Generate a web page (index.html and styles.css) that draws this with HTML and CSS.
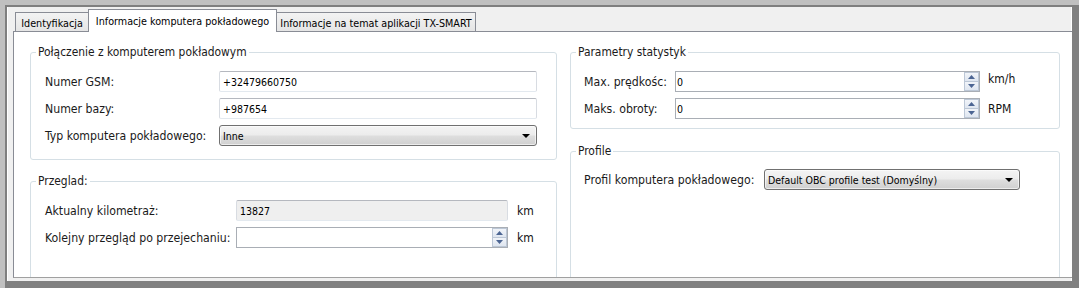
FILE: index.html
```html
<!DOCTYPE html>
<html lang="pl">
<head>
<meta charset="utf-8">
<title>Informacje komputera pokładowego</title>
<link rel="stylesheet" href="styles.css">
</head>
<body>
<div class="window">
  <div class="tabstrip">
    <div class="tab tab-first">Identyfikacja</div>
    <div class="tab active">Informacje komputera pokładowego</div>
    <div class="tab tab-last">Informacje na temat aplikacji TX-SMART</div>
  </div>
  <div class="pane">
    <div class="col">
      <section class="group g-conn">
        <div class="legend">Połączenie z komputerem pokładowym</div>
        <span class="label">Numer GSM:</span>
        <div class="edit">+32479660750</div>
        <span class="label">Numer bazy:</span>
        <div class="edit">+987654</div>
        <span class="label">Typ komputera pokładowego:</span>
        <div class="combo"><span class="combo-text">Inne</span><svg class="arrow" width="8" height="4" viewBox="0 0 8 4"><path d="M0 0H8L4 4Z"/></svg></div>
      </section>
      <section class="group g-review">
        <div class="legend">Przeglad:</div>
        <span class="label">Aktualny kilometraż:</span>
        <div class="edit readonly">13827</div>
        <span class="unit">km</span>
        <span class="label">Kolejny przegląd po przejechaniu:</span>
        <div class="spin"><span class="spin-text"></span><div class="spin-btns"><div class="spin-btn"><svg width="7" height="4" viewBox="0 0 7 4"><path d="M0 4L3.5 0L7 4Z"/></svg></div><div class="spin-btn"><svg width="7" height="4" viewBox="0 0 7 4"><path d="M0 0H7L3.5 4Z"/></svg></div></div></div>
        <span class="unit">km</span>
      </section>
    </div>
    <div class="col">
      <section class="group g-stats">
        <div class="legend">Parametry statystyk</div>
        <span class="label">Max. prędkośc:</span>
        <div class="spin"><span class="spin-text">0</span><div class="spin-btns"><div class="spin-btn"><svg width="7" height="4" viewBox="0 0 7 4"><path d="M0 4L3.5 0L7 4Z"/></svg></div><div class="spin-btn"><svg width="7" height="4" viewBox="0 0 7 4"><path d="M0 0H7L3.5 4Z"/></svg></div></div></div>
        <span class="unit unit-up">km/h</span>
        <span class="label">Maks. obroty:</span>
        <div class="spin"><span class="spin-text">0</span><div class="spin-btns"><div class="spin-btn"><svg width="7" height="4" viewBox="0 0 7 4"><path d="M0 4L3.5 0L7 4Z"/></svg></div><div class="spin-btn"><svg width="7" height="4" viewBox="0 0 7 4"><path d="M0 0H7L3.5 4Z"/></svg></div></div></div>
        <span class="unit">RPM</span>
      </section>
      <section class="group g-profile">
        <div class="legend">Profile</div>
        <span class="label">Profil komputera pokładowego:</span>
        <div class="combo"><span class="combo-text">Default OBC profile test (Domyślny)</span><svg class="arrow" width="8" height="4" viewBox="0 0 8 4"><path d="M0 0H8L4 4Z"/></svg></div>
      </section>
    </div>
  </div>
</div>
</body>
</html>
```

FILE: styles.css
```css
html, body {
  margin: 0;
  padding: 0;
}

body {
  width: 1079px;
  height: 288px;
  overflow: hidden;
  background: #c0c0c0;
  font-family: "DejaVu Sans Condensed", "DejaVu Sans", sans-serif;
  color: #1e1e1e;
}

.window {
  margin: 5px 0 0 5px;
  height: 283px;
  box-sizing: border-box;
  border-top: 2px solid #7f7f7f;
  border-left: 2px solid #7f7f7f;
  border-right: 7px solid #808080;
  border-bottom: 7px solid #808080;
  background: #f0f0f0;
  box-shadow: inset 1px 0 #ffffff, inset -1px 0 #ffffff;
  display: flex;
  flex-direction: column;
  overflow: hidden;
}

/* ---------- tabs ---------- */
.tabstrip {
  height: 24px;
  flex: none;
  display: flex;
  align-items: flex-end;
  padding-left: 8px;
}

.tab {
  box-sizing: border-box;
  height: 19px;
  padding-top: 4px;
  font-size: 10.7px;
  line-height: 13px;
  text-align: center;
  white-space: nowrap;
  color: #000;
  background: linear-gradient(#f3f3f3, #e5e5e5);
  border: 1px solid #898c95;
  border-bottom: none;
}

.tab-first {
  width: 73px;
  border-right: none;
}

.tab-last {
  width: 199px;
  border-left: none;
}

.tab.active {
  width: 189px;
  height: 23px;
  padding-top: 5px;
  margin-bottom: -1px;
  background: #ffffff;
  position: relative;
  z-index: 1;
}

/* ---------- pane ---------- */
.pane {
  flex: 1;
  margin: 0 0 3px 6px;
  background: #ffffff;
  border-top: 1px solid #898c95;
  border-left: 1px solid #898c95;
  border-bottom: 1px solid #a0a0a0;
  padding: 20px 11px 0 16px;
  display: grid;
  grid-template-columns: 527px 490px;
  column-gap: 13px;
  overflow: hidden;
  min-height: 0;
}

.col {
  display: flex;
  flex-direction: column;
  row-gap: 21px;
}

.col:last-child {
  row-gap: 22px;
}

/* ---------- group boxes ---------- */
.group {
  position: relative;
  box-sizing: border-box;
  border: 1px solid #d5dfe5;
  border-radius: 3px;
  display: grid;
  row-gap: 6px;
  align-items: center;
  align-content: start;
  grid-auto-rows: 21px;
  padding: 18px 0 14px 14px;
}

.legend {
  position: absolute;
  top: -8px;
  left: 5px;
  padding: 0 2px;
  background: #ffffff;
  font-size: 11.9px;
  line-height: 15px;
  white-space: nowrap;
  color: #1a1a1a;
}

.g-conn {
  height: 108px;
  grid-template-columns: 174px 318px;
}

.g-review {
  flex: 1;
  margin-bottom: -20px;
  grid-template-columns: 191px 272px auto;
}

.g-stats {
  padding: 18px 0 9px 13px;
  grid-template-columns: 91px 305px auto;
}

.g-profile {
  flex: 1;
  margin-bottom: -20px;
  padding: 17px 0 0 13px;
  grid-template-columns: 180px 256px;
}

.label {
  font-size: 12.2px;
  white-space: nowrap;
  color: #1a1a1a;
}

.unit {
  font-size: 12px;
  margin-left: 9px;
  color: #111;
  white-space: nowrap;
}

.g-stats .unit {
  margin-left: 8px;
}

.unit-up {
  position: relative;
  top: -3px;
}

/* ---------- controls ---------- */
.edit,
.spin,
.combo {
  box-sizing: border-box;
  height: 21px;
  display: flex;
  align-items: center;
  font-size: 10.5px;
  color: #000;
}

.edit {
  padding-left: 3px;
  border: 1px solid;
  border-color: #b5b8bf #d8dce2 #e3e9ef #d8dce2;
  border-radius: 2px;
  background: #ffffff;
}

.edit.readonly {
  background: #efefef;
}

.spin {
  padding-left: 1px;
  border: 1px solid #a9aeb5;
  background: #ffffff;
}

.spin-text {
  flex: 1;
}

.spin-btns {
  align-self: stretch;
  width: 15px;
  display: flex;
  flex-direction: column;
}

.spin-btn {
  flex: 1;
  box-sizing: border-box;
  border: 1px solid #bcc7d6;
  background: linear-gradient(#f1f4f9, #dfe6f0);
  display: flex;
  align-items: center;
  justify-content: center;
}

.spin-btn + .spin-btn {
  border-top: none;
}

.spin-btn svg {
  fill: #4c6593;
}

.combo {
  padding: 0 6px 0 3px;
  border: 1px solid #707070;
  border-radius: 3px;
  background: linear-gradient(#f4f4f4 0%, #ececec 48%, #dedede 52%, #d0d0d0 100%);
  box-shadow: inset 0 0 0 1px rgba(255, 255, 255, 0.6);
}

.combo-text {
  flex: 1;
  white-space: nowrap;
}

.arrow {
  fill: #000;
}
```
